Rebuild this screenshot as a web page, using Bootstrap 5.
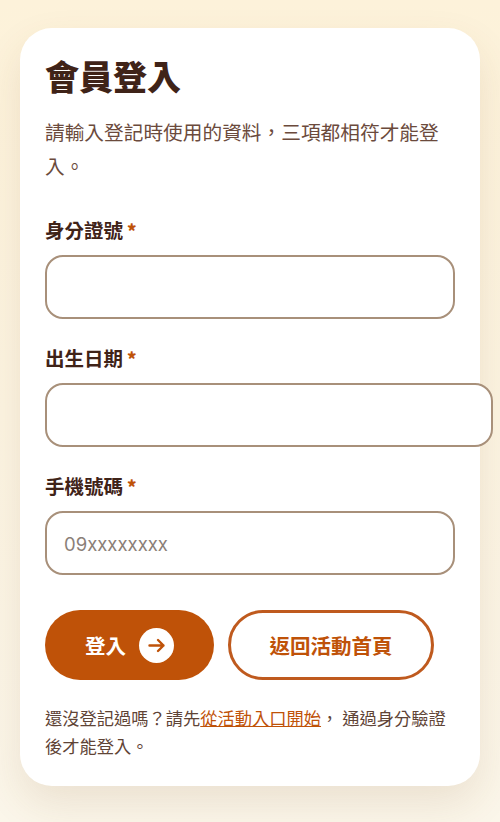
<!DOCTYPE html>
<html lang="zh-Hant">
<head>
<meta charset="utf-8">
<meta name="viewport" content="width=device-width, initial-scale=1">
<title>會員登入</title>
<link href="https://cdn.jsdelivr.net/npm/bootstrap@5.3.0/dist/css/bootstrap.min.css" rel="stylesheet">
<style>
html, body { height: 100%; overflow: hidden; }
body {
  font-family: "Noto Sans CJK TC", "Noto Sans", sans-serif;
  background: linear-gradient(180deg, #fdf2da 0%, #fbf6ea 100%);
  color: #3f2318;
  padding: 28px 20px 0;
}
.login-panel {
  background: #fff;
  border-radius: 32px;
  height: 758px;
  padding: 25px;
  box-shadow: 0 18px 40px rgba(120, 80, 30, .12);
}
.login-title { font-size: 34px; font-weight: 900; line-height: 46px; margin: 0 0 16px; color: #3f2318; }
.login-intro { font-size: 19.7px; line-height: 33.5px; color: #6b4a3c; margin: 0 0 35px; }
.field-label { font-size: 19.5px; font-weight: 700; line-height: 26px; color: #3f2318; margin: 0 0 12px; display: flex; align-items: baseline; gap: 4px; }
.field-star { color: #bf5208; font-size: 18px; font-weight: 900; }
.field-input.form-control {
  height: 64px;
  border: 2px solid #a8907a;
  border-radius: 18px;
  font-size: 18.5px;
  padding: 0 17px;
  color: #3f2318;
  background: #fff;
}
.field-input.form-control::placeholder { color: #8b7f78; font-family: Inter, sans-serif; opacity: 1; }
.field-wide.form-control { width: 448px; max-width: none; }
.field-block { margin-bottom: 26px; }
.action-row { margin-top: 35px; gap: 14px; }
.btn-enter.btn {
  background: #bf5208; color: #fff; border: 0; border-radius: 35px;
  width: 169px; height: 70px; font-size: 20.5px; font-weight: 700;
  gap: 13px;
}
.arrow-disc { width: 35px; height: 35px; background: #fff; border-radius: 50%; }
.btn-back.btn {
  background: #fff; color: #bf5208; border: 3px solid #bf5a1e; border-radius: 35px;
  width: 206px; height: 70px; font-size: 20.5px; font-weight: 700; padding: 0;
}
.login-note { font-size: 17.25px; line-height: 28px; color: #5f4436; margin: 24px 0 0; }
.login-note a { color: #bf5208; }
</style>
</head>
<body>
<main class="login-panel">
  <h1 class="login-title">會員登入</h1>
  <p class="login-intro">請輸入登記時使用的資料，三項都相符才能登入。</p>
  <form>
    <div class="field-block">
      <label class="field-label" for="f1">身分證號<span class="field-star">*</span></label>
      <input id="f1" type="text" class="form-control field-input">
    </div>
    <div class="field-block">
      <label class="field-label" for="f2">出生日期<span class="field-star">*</span></label>
      <input id="f2" type="text" class="form-control field-input field-wide">
    </div>
    <div class="field-block">
      <label class="field-label" for="f3">手機號碼<span class="field-star">*</span></label>
      <input id="f3" type="text" class="form-control field-input" placeholder="09xxxxxxxx">
    </div>
    <div class="d-flex action-row">
      <button type="button" class="btn btn-enter d-flex align-items-center justify-content-center">登入
        <span class="arrow-disc d-inline-flex align-items-center justify-content-center">
          <svg width="21" height="21" viewBox="0 0 21 21" fill="none" stroke="#bf5208" stroke-width="2.4" stroke-linecap="round" stroke-linejoin="round"><path d="M3.5 10.5h14M12 5l5.5 5.5L12 16"/></svg>
        </span>
      </button>
      <button type="button" class="btn btn-back">返回活動首頁</button>
    </div>
  </form>
  <p class="login-note">還沒登記過嗎？請先<a href="#">從活動入口開始</a>， 通過身分驗證後才能登入。</p>
</main>
</body>
</html>
